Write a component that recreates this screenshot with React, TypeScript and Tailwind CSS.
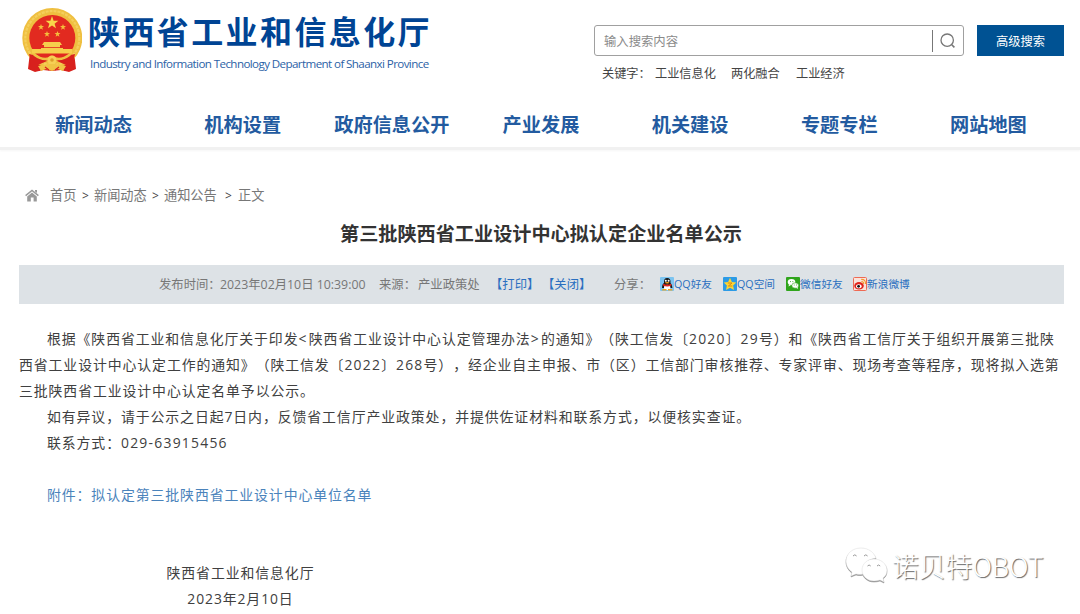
import React from 'react';

const navItems = ["新闻动态", "机构设置", "政府信息公开", "产业发展", "机关建设", "专题专栏", "网站地图"];

const Emblem = () => (
  <svg viewBox="0 0 60 65" className="w-[60px] h-[65px] shrink-0">
    <path d="M8 44 L6 61 L13 64 L21 62 L30 63 L39 62 L47 64 L54 61 L52 44 Z" fill="#d8211d" />
    <circle cx="30.3" cy="30" r="30" fill="#efbf40" />
    <circle cx="30.3" cy="30" r="27" fill="none" stroke="#f4cf5c" strokeWidth="2.2" strokeDasharray="3 1" />
    <circle cx="30.3" cy="30" r="23" fill="#e22a20" />
    <path d="M30 8 L31.6 12.8 H36.4 L32.6 15.7 L34 20.2 L30 17.4 L26 20.2 L27.4 15.7 L23.6 12.8 H28.4 Z" fill="#f9d64a" />
    {[[19, 19], [41, 19], [25, 26], [35.5, 26]].map(([x, y], i) => (
      <path
        key={i}
        transform={`translate(${x} ${y})`}
        d="M0 -3 L0.8 -0.9 H3 L1.2 0.5 L1.9 2.7 L0 1.4 L-1.9 2.7 L-1.2 0.5 L-3 -0.9 H-0.8 Z"
        fill="#f4bd3c"
      />
    ))}
    <path d="M22 34 H38 L40 37 H38 V40 H41 V41 H50 V45.5 H10 V41 H19 V40 H22 V37 H20 Z" fill="#f6cf4c" />
    <path d="M20 39.5 H40" stroke="#e22a20" strokeWidth="0.8" />
    <path d="M7 46 L20 49 L25 53 L16 57 L18 63 L7 61 L9 55 Z" fill="#d8211d" />
    <path d="M53 46 L40 49 L35 53 L44 57 L42 63 L53 61 L51 55 Z" fill="#d8211d" />
    <path d="M12 46.5 Q22 54 30 49 Q38 54 48 46.5" fill="none" stroke="#efc142" strokeWidth="2.6" />
    <circle cx="30" cy="52" r="4.6" fill="#f6d055" />
    <circle cx="30" cy="52" r="1.8" fill="#dca02a" />
    <path d="M16 58 L27 56 H33 L44 58 L41 63 L36 61 L30 63 L24 61 L19 63 Z" fill="#f0c445" />
    <path d="M23 59 L27 62 M37 59 L33 62" stroke="#d8211d" strokeWidth="1.2" />
  </svg>
);

const HomeIcon = () => (
  <svg viewBox="0 0 14 13" className="w-[14px] h-[13px] shrink-0">
    <path d="M0.6 6.6 L7 1.4 L13.4 6.6" fill="none" stroke="#999" strokeWidth="1.5" />
    <path d="M10 1 H12 V4 L10 2.6 Z" fill="#999" />
    <path d="M2.2 7.4 L7 3.6 L11.8 7.4 V12.6 H8.6 V8.6 H5.8 V12.6 H2.2 Z" fill="#999" />
  </svg>
);

const QQIcon = () => (
  <svg viewBox="0 0 14 14" className="w-[14px] h-[14px] shrink-0">
    <rect width="14" height="14" rx="1" fill="#7cc4f0" />
    <path d="M2 11 Q2 7 4 6 Q3.5 1 7.2 1 Q11 1 10.5 6 Q12.6 8 12.4 11 Z" fill="#1a1a1a" />
    <ellipse cx="7.2" cy="10.4" rx="3.2" ry="2.6" fill="#fff" />
    <circle cx="5.8" cy="3.8" r="1" fill="#fff" />
    <circle cx="8.6" cy="3.8" r="1" fill="#fff" />
    <ellipse cx="7.2" cy="5.8" rx="2.2" ry="0.8" fill="#f7a51c" />
    <path d="M3.2 6.8 Q7.2 8.8 11.2 6.8 L11.5 8.6 Q7.2 10.4 3 8.6 Z" fill="#e5261f" />
    <path d="M2.5 12 H6.5 V13.5 H2 Z M8 12 H12 L12.5 13.5 H8 Z" fill="#f7a51c" />
  </svg>
);

const QzoneIcon = () => (
  <svg viewBox="0 0 14 14" className="w-[14px] h-[14px] shrink-0">
    <rect width="14" height="14" rx="1" fill="#2c9be6" />
    <path d="M7 0.8 L8.9 4.9 L13.3 5.4 L10.1 8.4 L11 13 L7 10.7 L3 13 L3.9 8.4 L0.7 5.4 L5.1 4.9 Z" fill="#fcd535" />
    <path d="M4.8 6 H9 L5.4 9 H9.4" fill="none" stroke="#d88b12" strokeWidth="1" />
  </svg>
);

const WechatIcon = () => (
  <svg viewBox="0 0 14 14" className="w-[14px] h-[14px] shrink-0">
    <rect width="14" height="14" rx="1" fill="#2fa51c" />
    <ellipse cx="5.5" cy="5.1" rx="3.8" ry="3" fill="#fff" />
    <path d="M3 7 L2.6 9.4 L5 8 Z" fill="#fff" />
    <ellipse cx="9.2" cy="8.5" rx="3.4" ry="2.7" fill="#fff" stroke="#2fa51c" strokeWidth="0.6" />
    <path d="M10 10.8 L11.8 12 L11.6 9.8 Z" fill="#fff" />
    <path d="M4 4.6 h0.9 M6.4 4.6 h0.9 M7.8 8 h0.8 M10 8 h0.8" stroke="#2fa51c" strokeWidth="0.9" />
  </svg>
);

const WeiboIcon = () => (
  <svg viewBox="0 0 14 14" className="w-[14px] h-[14px] shrink-0">
    <rect x="0.5" y="0.5" width="13" height="13" rx="1" fill="#fbe3da" stroke="#ee6a54" />
    <ellipse cx="6" cy="8.8" rx="4.8" ry="3.7" fill="#e0241c" />
    <ellipse cx="5.8" cy="9.2" rx="2.8" ry="2" fill="#fff" />
    <circle cx="5.6" cy="9.3" r="1.4" fill="#111" />
    <path d="M8.4 4.6 Q10.8 4.6 10.6 7 M8.2 2.4 Q12.8 2.2 12.5 7" fill="none" stroke="#f39a2a" strokeWidth="1.1" />
  </svg>
);

const shareItems = [
  { name: "QQ好友", icon: <QQIcon />, width: "w-[63px]" },
  { name: "QQ空间", icon: <QzoneIcon />, width: "w-[63px]" },
  { name: "微信好友", icon: <WechatIcon />, width: "w-[67px]" },
  { name: "新浪微博", icon: <WeiboIcon />, width: "w-[60px]" }
];

const Header = () => (
  <header className="h-[150px] border-b-[3px] border-[#f1f1f1] shadow-[0_1px_2px_#f6f6f6]">
    <div className="flex h-[99px]">
      <div className="flex pl-[22px] pt-2 w-[594px]">
        <Emblem />
        <div className="pl-[6px]">
          <h1 className="text-[32px] leading-[48px] tracking-[2.4px] font-bold text-[#004494] whitespace-nowrap">
            陕西省工业和信息化厅
          </h1>
          <p className="text-[11.6px] leading-[16px] tracking-[-0.6px] pl-[2px] text-[#2c62a6] whitespace-nowrap">
            Industry and Information Technology Department of Shaanxi Province
          </p>
        </div>
      </div>
      <div className="pt-[25px]">
        <div className="flex">
          <div className="flex items-center w-[370px] h-[31px] border border-[#a0a0a0] rounded-[3px] pl-[9px]">
            <span className="flex-1 pt-[3px] text-[12.35px] text-[#8a8a8a]">输入搜索内容</span>
            <div className="w-[31px] h-[22px] border-l border-[#777] flex items-center pl-[7px]">
              <svg viewBox="0 0 16 16" className="w-4 h-4">
                <circle cx="7.2" cy="7.2" r="6.2" fill="none" stroke="#777" strokeWidth="1.3" />
                <path d="M11.8 11.8 L14.4 14.4" stroke="#777" strokeWidth="1.6" />
              </svg>
            </div>
          </div>
          <button className="ml-[13px] pt-[3px] w-[87px] h-[31px] bg-[#005293] text-white text-[12.3px]">高级搜索</button>
        </div>
        <div className="flex pl-2 pt-2 text-[12.2px] leading-5 text-[#444]">
          <span className="w-[53px] whitespace-nowrap">关键字：</span>
          <span className="w-[76px]">工业信息化</span>
          <span className="w-[65px]">两化融合</span>
          <span>工业经济</span>
        </div>
      </div>
    </div>
    <nav className="grid grid-cols-7 ml-[19px] w-[1044px]">
      {navItems.map((item) => (
        <a key={item} className="text-center text-[19.2px] leading-[51px] font-bold text-[#235ba0]">
          {item}
        </a>
      ))}
    </nav>
  </header>
);

const Breadcrumb = () => (
  <div className="flex items-center h-5 mt-[36px] pl-[25px] text-[13.2px] text-[#777] whitespace-nowrap">
    <div className="pb-[2px]">
      <HomeIcon />
    </div>
    <span className="ml-[11px] w-[32px]">首页</span>
    <span className="w-[12px] text-[12px] text-[#444]">&gt;</span>
    <span className="w-[58px]">新闻动态</span>
    <span className="w-[12px] text-[12px] text-[#444]">&gt;</span>
    <span className="w-[61px]">通知公告</span>
    <span className="w-[13px] text-[12px] text-[#444]">&gt;</span>
    <span>正文</span>
  </div>
);

const MetaBar = () => (
  <div className="flex items-center h-[39px] mr-4 ml-[19px] mt-[17px] pl-[140px] pt-[2px] bg-[#dde2e6] text-[12.35px] text-[#777] whitespace-nowrap">
    <span className="w-[61px]">发布时间：</span>
    <span className="w-[159px]">2023年02月10日 10:39:00</span>
    <span className="w-[39px]">来源：</span>
    <span className="w-[72px]">产业政策处</span>
    <a className="w-[52px] text-[#2a6fc0]">【打印】</a>
    <a className="w-[72px] text-[#2a6fc0]">【关闭】</a>
    <span className="w-[46px]">分享：</span>
    {shareItems.map((item) => (
      <a key={item.name} className={`flex items-center pb-[3px] text-[10.7px] text-[#2a6fc0] ${item.width}`}>
        {item.icon}
        <span className="pt-px">{item.name}</span>
      </a>
    ))}
  </div>
);

const Num = ({ children }: { children: React.ReactNode }) => (
  <span className="tracking-[1.25px]">{children}</span>
);

const Article = () => (
  <article className="mt-[22px] pl-[19px] text-[13.9px] leading-[26px] tracking-[0.9px] text-[#404040] whitespace-nowrap">
    <p className="pl-[28px]">
      根据《陕西省工业和信息化厅关于印发<span className="tracking-[2.4px]">&lt;</span>陕西省工业设计中心认定管理办法<span className="tracking-[2.4px]">&gt;</span>的通知》（陕工信发〔<Num>2020</Num>〕<Num>29</Num>号）和《陕西省工信厅关于组织开展第三批陕
    </p>
    <p>
      西省工业设计中心认定工作的通知》（陕工信发〔<Num>2022</Num>〕<Num>268</Num>号），经企业自主申报、市（区）工信部门审核推荐、专家评审、现场考查等程序，现将拟入选第
    </p>
    <p>三批陕西省工业设计中心认定名单予以公示。</p>
    <p className="pl-[28px]">如有异议，请于公示之日起7日内，反馈省工信厅产业政策处，并提供佐证材料和联系方式，以便核实查证。</p>
    <p className="pl-[28px]">联系方式：<Num>029-63915456</Num></p>
    <p className="pl-[28px] pt-[26px] text-[#4a83bb]">附件：拟认定第三批陕西省工业设计中心单位名单</p>
    <div className="w-[443px] pt-[52px] text-center">
      <p>陕西省工业和信息化厅</p>
      <p>2023年2月10日</p>
    </div>
  </article>
);

const Watermark = () => (
  <div className="absolute left-[845px] top-[547px] flex items-center">
    <svg viewBox="0 0 44 38" className="w-[44px] h-[38px] overflow-visible drop-shadow-[0.5px_1px_0.6px_#888]">
      <path
        d="M16 1 C7 1 1 7 1 14 C1 19 4 23 7 25 L6 29 L11 27 Q15 28 18 27 Q17 13 31 11 C29 5 23 1 16 1 Z"
        fill="#fff"
        stroke="#ddd"
        strokeWidth="0.5"
      />
      <path
        d="M29 12 C22 12 17 17 17 23 C17 29 22 34 29 34 Q32 34 35 33 L39 35 L38 31 C41 29 42 26 42 23 C42 17 36 12 29 12 Z"
        fill="#fff"
        stroke="#ddd"
        strokeWidth="0.5"
      />
      <path
        d="M8 9 q1.8 -2.4 3.6 0 M19 9 q1.8 -2.4 3.6 0 M22.5 19 q1.6 -2 3.2 0 M32 19 q1.6 -2 3.2 0"
        fill="none"
        stroke="#999"
        strokeWidth="1"
      />
    </svg>
    <span className="pl-[3px] text-[26.8px] leading-[38px] font-light text-white whitespace-nowrap [text-shadow:1px_1px_1px_#666] font-['Noto_Sans_CJK_SC',sans-serif]">
      诺贝特OBOT
    </span>
  </div>
);

const App = () => {
  return (
    <div className="relative w-[1080px] h-[614px] overflow-hidden bg-white font-['Open_Sans','Noto_Sans_CJK_SC',sans-serif] [text-spacing-trim:space-all]">
      <Header />
      <Breadcrumb />
      <h2 className="mt-[14px] pl-[2px] text-center text-[19.15px] leading-7 font-bold text-[#333]">
        第三批陕西省工业设计中心拟认定企业名单公示
      </h2>
      <MetaBar />
      <Article />
      <Watermark />
    </div>
  );
};

export default App;
